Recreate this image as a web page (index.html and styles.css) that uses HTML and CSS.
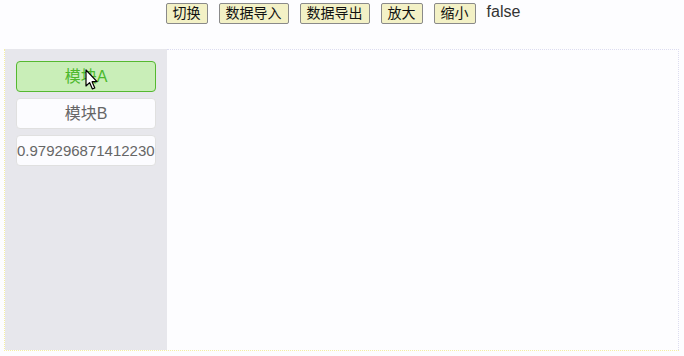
FILE: index.html
```html
<!DOCTYPE html>
<html>
<head>
<meta charset="utf-8">
<link rel="stylesheet" href="styles.css">
</head>
<body>
<div class="toolbar">
  <button class="btn">切换</button>
  <button class="btn">数据导入</button>
  <button class="btn">数据导出</button>
  <button class="btn">放大</button>
  <button class="btn">缩小</button>
  <span class="flag">false</span>
</div>
<div class="stage">
  <div class="sidebar">
    <div class="item active">模块A
      <svg class="cursor" width="14" height="22" viewBox="0 0 14 22"><path d="M1 1 L1 17 L4.6 13.6 L7.4 20 L9.8 19 L7.1 12.7 L12 12.7 Z" fill="#fff" stroke="#000" stroke-width="1.2" stroke-linejoin="round"/></svg>
    </div>
    <div class="item">模块B</div>
    <div class="item num">0.9792968714122305</div>
  </div>
  <div class="canvas"></div>
</div>
</body>
</html>
```
FILE: styles.css
```css
html, body {
  margin: 0;
  padding: 0;
  background: #fdfdff;
  font-family: "Liberation Sans", "Noto Sans CJK SC", sans-serif;
}
.toolbar {
  display: flex;
  justify-content: center;
  align-items: center;
  gap: 11px;
  height: 21px;
  padding-top: 3px;
  padding-left: 2px;
}
.btn {
  font-family: "Liberation Sans", "Noto Sans CJK SC", sans-serif;
  font-size: 14px;
  height: 21px;
  padding: 0 6px;
  margin: 0;
  background: #f3f1c6;
  border: 1px solid #8a8a8a;
  border-radius: 2px;
  color: #111;
  line-height: 19px;
}
.flag {
  font-size: 16px;
  color: #333;
  line-height: 21px;
  margin-top: -4px;
}
.stage {
  display: flex;
  margin: 25px 0 0 4px;
  width: 675px;
  height: 302px;
  border-left: 1px dotted #f5f0a0;
  border-bottom: 1px dotted #f5f0a0;
  box-sizing: border-box;
}
.sidebar {
  width: 162px;
  flex: none;
  background: #e7e7ec;
  padding: 12px 11px 0 11px;
  box-sizing: border-box;
  display: flex;
  flex-direction: column;
  gap: 6px;
}
.canvas {
  flex: 1;
  border-top: 1px dotted #dcdcf0;
  border-right: 1px dotted #dcdcf0;
}
.item {
  position: relative;
  height: 31px;
  box-sizing: border-box;
  border: 1px solid #e0e0e0;
  border-radius: 4px;
  background: #fcfcff;
  color: #666;
  font-size: 16px;
  line-height: 29px;
  text-align: center;
  white-space: nowrap;
  overflow: hidden;
}
.item.num {
  font-size: 15px;
}
.item.active {
  overflow: visible;
  background: #c9eeb8;
  border-color: #55b830;
  color: #4cb82c;
}
.cursor {
  position: absolute;
  left: 68px;
  top: 7px;
}
```
